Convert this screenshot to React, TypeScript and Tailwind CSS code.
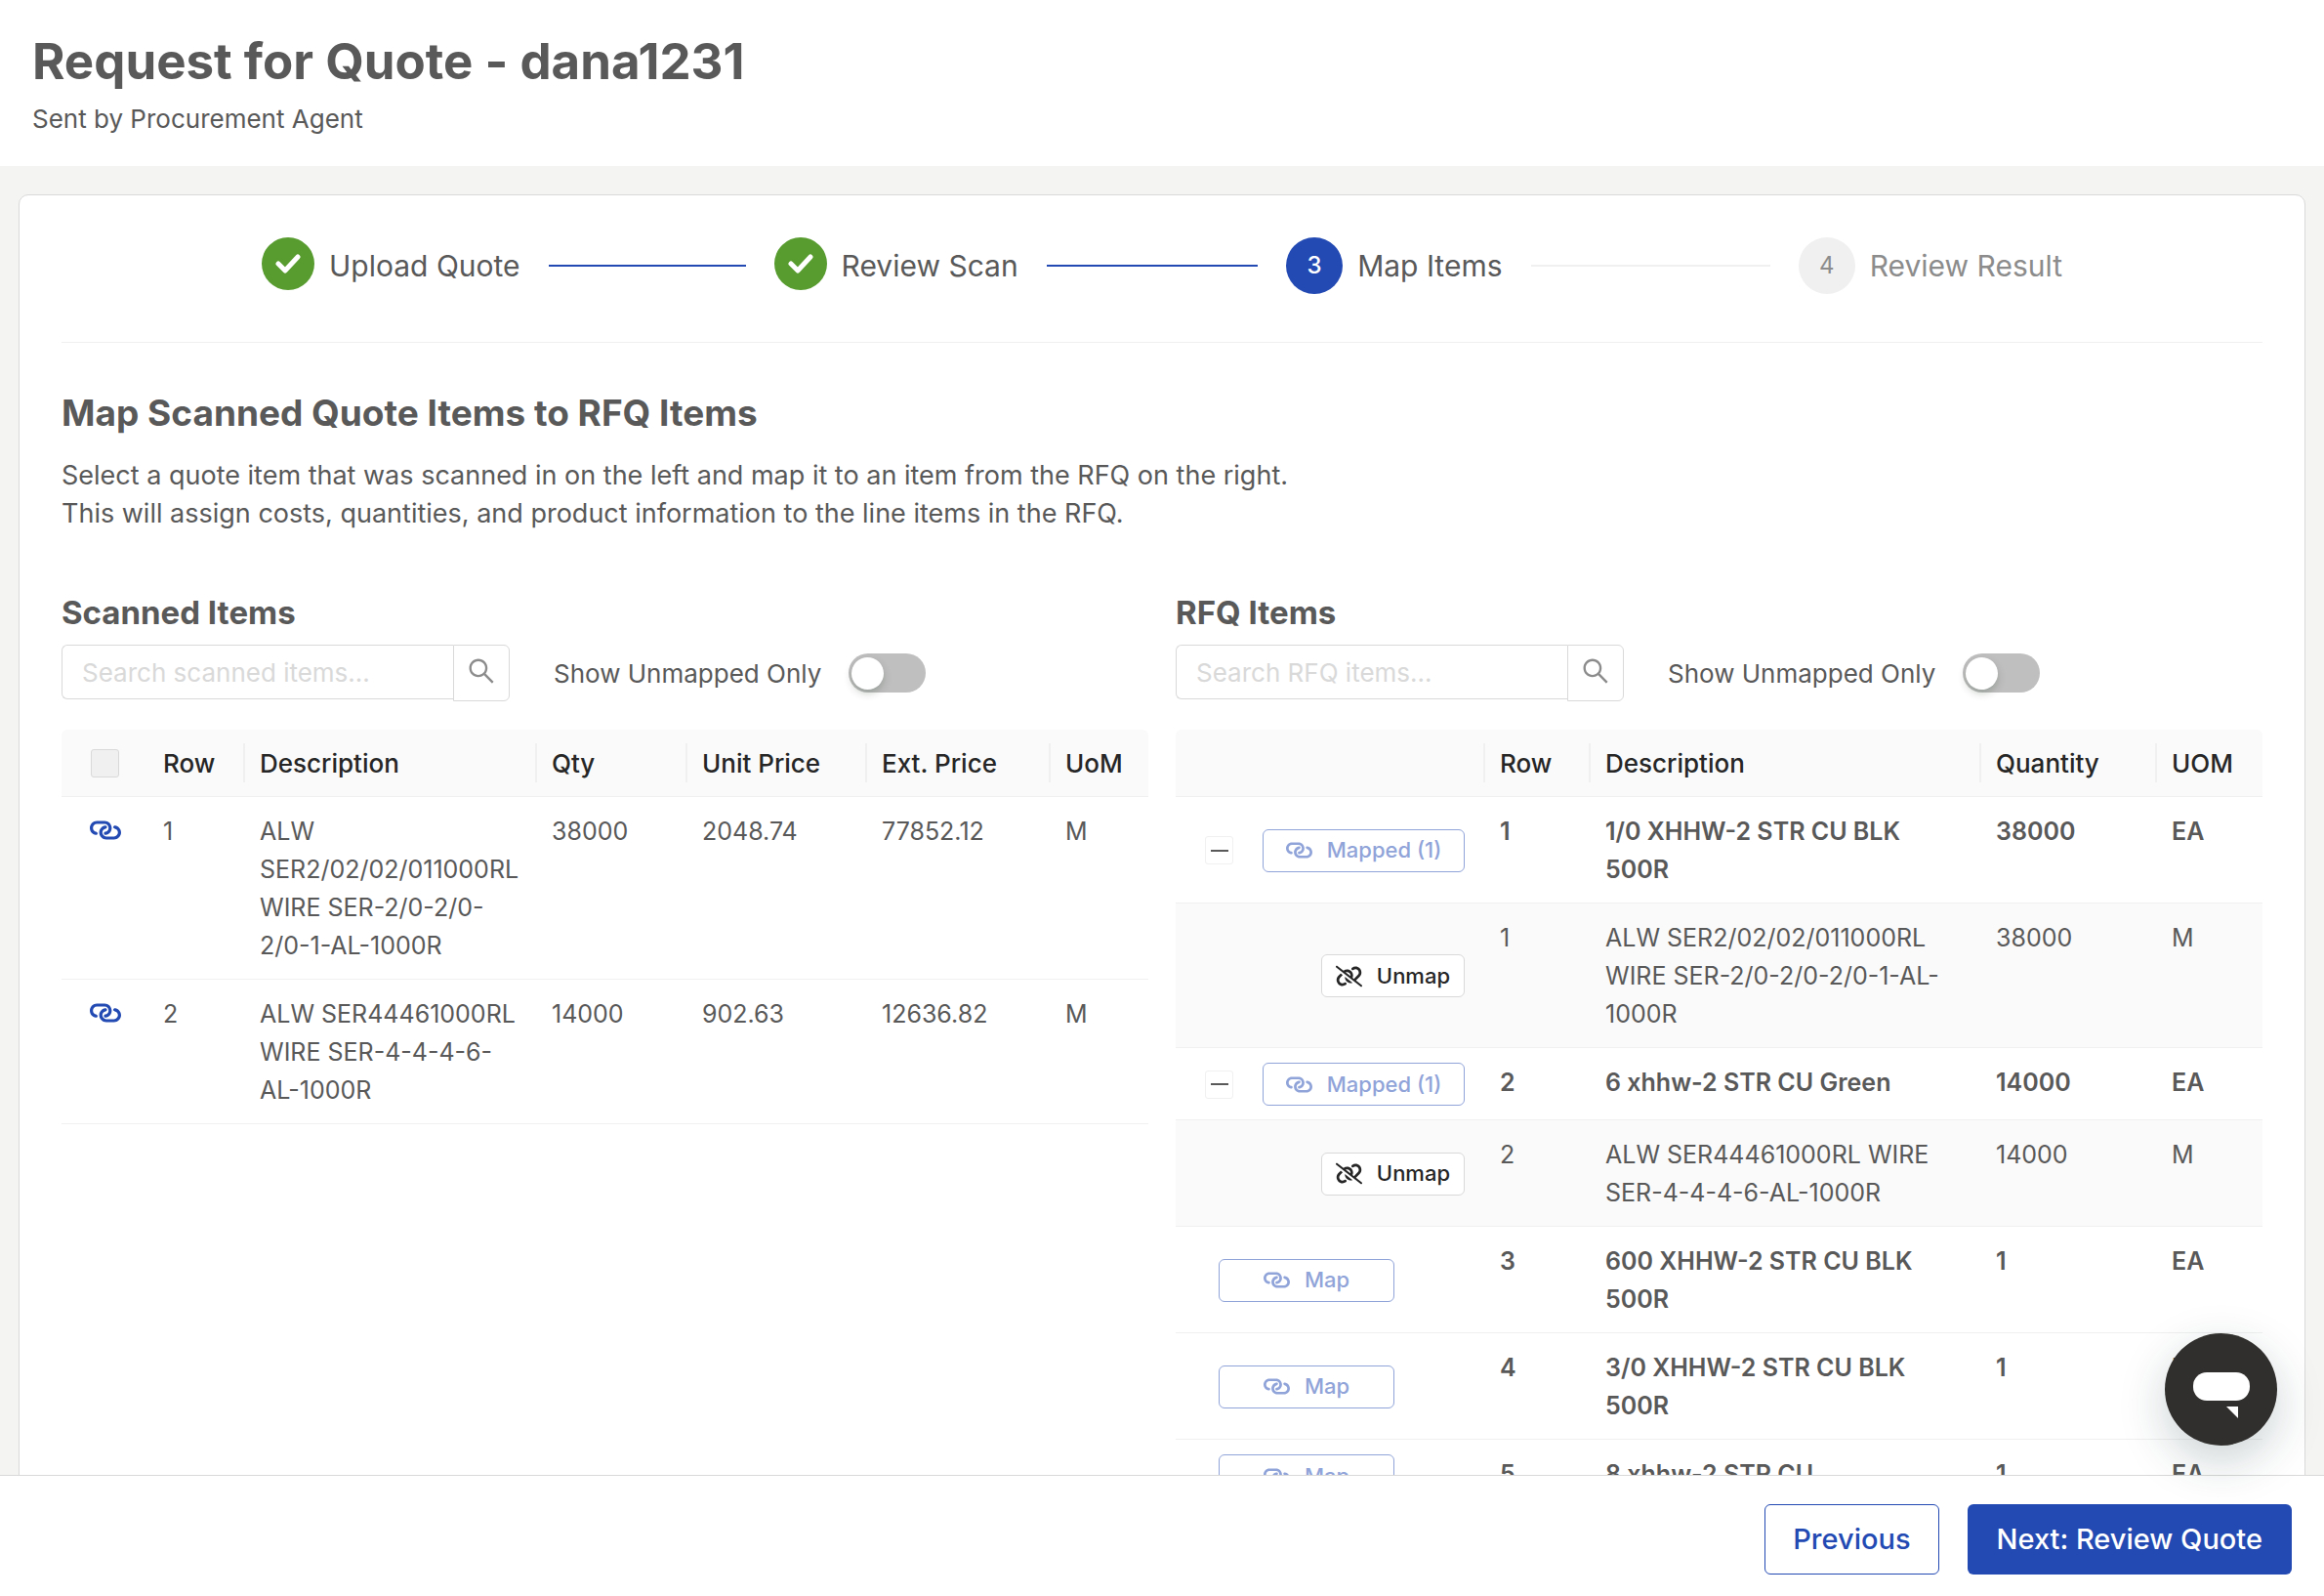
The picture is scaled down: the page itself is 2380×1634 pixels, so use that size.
import { useState } from "react";
import { clsx } from "clsx";
import { AiOutlineSearch } from "react-icons/ai";
import { FaLink, FaLinkSlash } from "react-icons/fa6";

type StepStatus = "done" | "active" | "pending";

interface Step {
    title: string;
    status: StepStatus;
}

interface ScannedItem {
    row: number;
    description: string;
    qty: string;
    unitPrice: string;
    extPrice: string;
    uom: string;
}

interface RfqItem {
    row: number;
    description: string;
    quantity: string;
    uom: string;
    kind: "mapped" | "child" | "unmapped";
}

const steps: Step[] = [
    { title: "Upload Quote", status: "done" },
    { title: "Review Scan", status: "done" },
    { title: "Map Items", status: "active" },
    { title: "Review Result", status: "pending" }
];

const scannedItems: ScannedItem[] = [
    {
        row: 1,
        description: "ALW\nSER2/02/02/011000RL\nWIRE SER-2/0-2/0-\n2/0-1-AL-1000R",
        qty: "38000",
        unitPrice: "2048.74",
        extPrice: "77852.12",
        uom: "M"
    },
    {
        row: 2,
        description: "ALW SER44461000RL\nWIRE SER-4-4-4-6-\nAL-1000R",
        qty: "14000",
        unitPrice: "902.63",
        extPrice: "12636.82",
        uom: "M"
    }
];

const rfqItems: RfqItem[] = [
    { row: 1, description: "1/0 XHHW-2 STR CU BLK\n500R", quantity: "38000", uom: "EA", kind: "mapped" },
    {
        row: 1,
        description: "ALW SER2/02/02/011000RL\nWIRE SER-2/0-2/0-2/0-1-AL-\n1000R",
        quantity: "38000",
        uom: "M",
        kind: "child"
    },
    { row: 2, description: "6 xhhw-2 STR CU Green", quantity: "14000", uom: "EA", kind: "mapped" },
    { row: 2, description: "ALW SER44461000RL WIRE\nSER-4-4-4-6-AL-1000R", quantity: "14000", uom: "M", kind: "child" },
    { row: 3, description: "600 XHHW-2 STR CU BLK\n500R", quantity: "1", uom: "EA", kind: "unmapped" },
    { row: 4, description: "3/0 XHHW-2 STR CU BLK\n500R", quantity: "1", uom: "EA", kind: "unmapped" },
    { row: 5, description: "8 xhhw-2 STR CU", quantity: "1", uom: "EA", kind: "unmapped" }
];

const Stepper = () => (
    <ol className="flex px-[205px]">
        {steps.map((step, i) => (
            <li key={step.title} className={clsx("flex h-[58px] items-center", i < steps.length - 1 && "flex-1")}>
                {step.status === "done" ? (
                    <span className="mb-1 flex size-[54px] shrink-0 items-center justify-center rounded-full bg-[#589c30]">
                        <svg width="26" height="20" viewBox="0 0 26 20" fill="none" stroke="#fff" strokeWidth="5" strokeLinecap="round" strokeLinejoin="round">
                            <path d="M3 10l7 7L23 3" />
                        </svg>
                    </span>
                ) : (
                    <span
                        className={clsx(
                            "flex size-[58px] shrink-0 items-center justify-center rounded-full text-2xl",
                            step.status === "active" ? "bg-[#234ab3] font-medium text-white" : "bg-[#f0f0f0] text-[#8c8c8c]"
                        )}
                    >
                        {i + 1}
                    </span>
                )}
                <span
                    className={clsx(
                        "ml-[15px] text-3xl whitespace-nowrap",
                        step.status === "pending" && "text-[#8c8c8c]"
                    )}
                >
                    {step.title}
                </span>
                {i < steps.length - 1 && (
                    <span className={clsx("mx-[29px] h-[2px] flex-1", step.status === "done" ? "bg-[#234ab3]" : "bg-[#f0f0f0]")} />
                )}
            </li>
        ))}
    </ol>
);

const Toolbar = ({ id, placeholder }: { id: string; placeholder: string }) => {
    const [query, setQuery] = useState("");
    const [unmappedOnly, setUnmappedOnly] = useState(false);

    return (
        <div className="flex items-start">
            <input
                type="text"
                aria-label={placeholder}
                placeholder={placeholder}
                value={query}
                onChange={e => setQuery(e.target.value)}
                className="h-14 w-[401px] rounded-l-md border border-r-0 border-[#d9d9d9] px-5 text-[26px] placeholder:text-[#d9d9d9] focus:outline-none"
            />
            <button
                type="button"
                aria-label="Search"
                className="flex h-[58px] w-[58px] items-center justify-center rounded-r-md border border-[#d9d9d9] pb-1 text-[#8c8c8c]"
            >
                <AiOutlineSearch size={32} />
            </button>
            <label htmlFor={id} className="ml-[45px] flex h-[58px] items-center gap-7 text-[26px]">
                Show Unmapped Only
                <input
                    id={id}
                    type="checkbox"
                    role="switch"
                    checked={unmappedOnly}
                    onChange={e => setUnmappedOnly(e.target.checked)}
                    className="flex h-10 w-[79px] appearance-none items-center rounded-full bg-[#bfbfbf] px-[3px] before:size-[33px] before:rounded-full before:bg-white before:shadow-[0_4px_8px_rgba(0,35,11,0.2)] checked:justify-end checked:bg-[#234ab3]"
                />
            </label>
        </div>
    );
};

const HeaderCell = ({ children, divider = true }: { children?: React.ReactNode; divider?: boolean }) => (
    <th className="h-[69px] border-b border-[#f0f0f0] bg-[#fafafa] p-0 text-left text-[26px] font-medium text-[#262626] first:rounded-tl-md last:rounded-tr-md">
        <div className={clsx("flex h-10 items-center px-[15px]", divider && "border-r-2 border-[#f0f0f0]")}>{children}</div>
    </th>
);

const Cell = ({ children }: { children: React.ReactNode }) => (
    <td className="border-b border-[#f0f0f0] px-[15px] pt-4 pb-[14px] align-top whitespace-pre">{children}</td>
);

const ScannedTable = () => (
    <table className="w-full table-fixed border-separate border-spacing-0 text-[25px] leading-[39px]">
        <colgroup>
            <col className="w-[89px]" />
            <col className="w-[99px]" />
            <col className="w-[299px]" />
            <col className="w-[154px]" />
            <col className="w-[184px]" />
            <col className="w-[188px]" />
            <col className="w-[100px]" />
        </colgroup>
        <thead>
            <tr>
                <HeaderCell divider={false}>
                    <input
                        type="checkbox"
                        aria-label="Select all scanned items"
                        disabled
                        className="ml-[15px] size-[29px] appearance-none rounded-[3px] border border-[#d9d9d9] bg-[#f0f0f0]"
                    />
                </HeaderCell>
                <HeaderCell>Row</HeaderCell>
                <HeaderCell>Description</HeaderCell>
                <HeaderCell>Qty</HeaderCell>
                <HeaderCell>Unit Price</HeaderCell>
                <HeaderCell>Ext. Price</HeaderCell>
                <HeaderCell divider={false}>UoM</HeaderCell>
            </tr>
        </thead>
        <tbody>
            {scannedItems.map(item => (
                <tr key={item.row}>
                    <Cell>
                        <span className="flex h-9 items-center justify-center text-[#234ab3]">
                            <FaLink size={32} className="rotate-45" />
                        </span>
                    </Cell>
                    <Cell>{item.row}</Cell>
                    <Cell>{item.description}</Cell>
                    <Cell>{item.qty}</Cell>
                    <Cell>{item.unitPrice}</Cell>
                    <Cell>{item.extPrice}</Cell>
                    <Cell>{item.uom}</Cell>
                </tr>
            ))}
        </tbody>
    </table>
);

const RfqAction = ({ kind }: { kind: RfqItem["kind"] }) => {
    if (kind === "unmapped") {
        return (
            <button
                type="button"
                className="ml-[29px] flex h-11 w-[180px] items-center justify-center gap-[15px] rounded-md border border-[#91a4d9] bg-white text-[22px] font-medium text-[#91a4d9]"
            >
                <FaLink size={27} className="rotate-45" />
                Map
            </button>
        );
    }

    if (kind === "child") {
        return (
            <button
                type="button"
                className="ml-auto flex h-11 items-center gap-[15px] rounded-md border border-[#d9d9d9] bg-white px-[14px] text-[22px] font-medium text-[#262626]"
            >
                <FaLinkSlash size={27} />
                Unmap
            </button>
        );
    }

    return (
        <div className="flex items-center justify-between pl-[15px]">
            <button
                type="button"
                aria-label="Collapse row"
                className="flex size-[29px] items-center justify-center rounded-[3px] border border-[#f0f0f0] bg-white"
            >
                <span className="h-[2px] w-[18px] bg-[#595959]" />
            </button>
            <button
                type="button"
                className="flex h-11 w-[207px] items-center justify-center gap-[15px] rounded-md border border-[#91a4d9] bg-white text-[22px] font-medium text-[#91a4d9]"
            >
                <FaLink size={27} className="rotate-45" />
                Mapped (1)
            </button>
        </div>
    );
};

const RfqTable = () => (
    <table className="w-full table-fixed border-separate border-spacing-0 text-[25px] leading-[39px]">
        <colgroup>
            <col className="w-[317px]" />
            <col className="w-[108px]" />
            <col className="w-[400px]" />
            <col className="w-[180px]" />
            <col className="w-[108px]" />
        </colgroup>
        <thead>
            <tr>
                <HeaderCell />
                <HeaderCell>Row</HeaderCell>
                <HeaderCell>Description</HeaderCell>
                <HeaderCell>Quantity</HeaderCell>
                <HeaderCell divider={false}>UOM</HeaderCell>
            </tr>
        </thead>
        <tbody>
            {rfqItems.map(item => (
                <tr key={`${item.kind}-${item.row}`} className={item.kind === "child" ? "bg-[#fafafa]" : "font-semibold"}>
                    <td className="border-b border-[#f0f0f0] pt-[15px] pb-[14px] pr-[21px] pl-[15px] align-middle">
                        <RfqAction kind={item.kind} />
                    </td>
                    <Cell>{item.row}</Cell>
                    <Cell>{item.description}</Cell>
                    <Cell>{item.quantity}</Cell>
                    <Cell>{item.uom}</Cell>
                </tr>
            ))}
        </tbody>
    </table>
);

export default function App() {
    return (
        <div className="relative flex h-screen flex-col overflow-hidden bg-[#f4f4f2] font-[Inter,sans-serif] text-[#595959]">
            <header className="h-[170px] shrink-0 bg-white px-[33px] pt-8">
                <h1 className="text-[51px] leading-[62px] font-bold">Request for Quote - dana1231</h1>
                <p className="mt-2 text-[26px] leading-[39px]">Sent by Procurement Agent</p>
            </header>

            <main className="min-h-0 flex-1 overflow-y-auto px-[19px] pt-[29px] [scrollbar-width:none]">
                <section className="rounded-[10px] border border-[#d9d9d9] bg-white px-[43px] pt-[43px] pb-10">
                    <Stepper />
                    <hr className="mt-[49px] border-[#f0f0f0]" />

                    <h2 className="mt-12 text-[37px] leading-[48px] font-bold">Map Scanned Quote Items to RFQ Items</h2>
                    <p className="mt-5 text-[27px] leading-[39px]">
                        Select a quote item that was scanned in on the left and map it to an item from the RFQ on the right.
                        <br />
                        This will assign costs, quantities, and product information to the line items in the RFQ.
                    </p>

                    <div className="mt-[62px] grid grid-cols-2 gap-7">
                        <div>
                            <h3 className="mb-[13px] text-[33px] leading-10 font-bold">Scanned Items</h3>
                            <Toolbar id="scanned-unmapped" placeholder="Search scanned items..." />
                            <div className="mt-[29px]">
                                <ScannedTable />
                            </div>
                        </div>
                        <div>
                            <h3 className="mb-[13px] text-[33px] leading-10 font-bold">RFQ Items</h3>
                            <Toolbar id="rfq-unmapped" placeholder="Search RFQ items..." />
                            <div className="mt-[29px]">
                                <RfqTable />
                            </div>
                        </div>
                    </div>
                </section>
            </main>

            <footer className="flex h-[124px] shrink-0 justify-end gap-[29px] border-t border-[#d9d9d9] bg-white pt-[29px] pr-[33px]">
                <button
                    type="button"
                    className="h-[72px] rounded-md border border-[#234ab3] bg-white px-7 text-[29px] font-medium text-[#234ab3]"
                >
                    Previous
                </button>
                <button type="button" className="h-[72px] rounded-md bg-[#234ab3] px-[30px] text-[29px] font-medium text-white">
                    Next: Review Quote
                </button>
            </footer>

            <button
                type="button"
                aria-label="Open chat"
                className="absolute right-12 bottom-[154px] flex size-[115px] items-center justify-center rounded-full bg-[#312f2d] shadow-[0_16px_48px_rgba(20,50,60,0.22)]"
            >
                <svg width="58" height="48" viewBox="0 0 58 48" fill="#fff" className="mt-3">
                    <rect width="58" height="29" rx="14" />
                    <path d="M34 35h12v12z" />
                </svg>
            </button>
        </div>
    );
}
